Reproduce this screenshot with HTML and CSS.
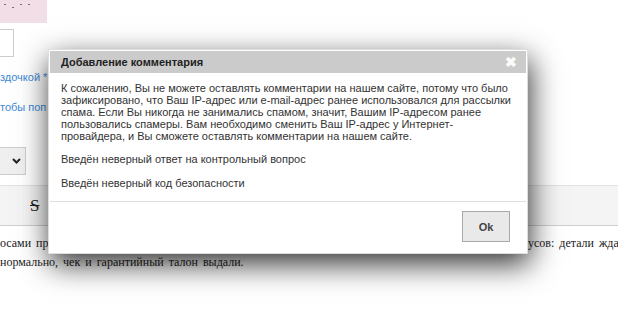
FILE: index.html
```html
<!DOCTYPE html>
<html lang="ru">
<head>
    <meta charset="UTF-8">
    <title>Добавление комментария</title>
    <link rel="stylesheet" href="styles.css">
</head>
<body>
    <div class="page">
        <div class="captcha"><span class="dot"></span><span class="dot"></span><span class="dot"></span><span class="dot"></span></div>
        <div class="field"></div>
        <div class="hint">здочкой *</div>
        <div class="hint hint-second">тобы поп</div>
        <div class="select">
            <svg width="9" height="6" viewBox="0 0 9 6"><polyline points="1,1 4.5,4.5 8,1" fill="none" stroke="#222" stroke-width="2"/></svg>
        </div>
        <div class="toolbar">
            <span class="strike">S</span>
        </div>
        <div class="review">
            <div class="review-line">
                <span class="review-left">осами при оформлении заказа помогли, менеджер подробно рассказал о смене статусов:</span>
                <span>усов: детали ждать не пришлось</span>
            </div>
            <div class="review-line">нормально, чек и гарантийный талон выдали.</div>
        </div>
    </div>

    <!-- Comment dialog -->
    <div class="dialog">
        <div class="dialog-title">
            <span>Добавление комментария</span>
            <span class="dialog-close">✖</span>
        </div>
        <div class="dialog-body">
            <p>К сожалению, Вы не можете оставлять комментарии на нашем сайте, потому что было зафиксировано, что Ваш IP-адрес или e-mail-адрес ранее использовался для рассылки спама. Если Вы никогда не занимались спамом, значит, Вашим IP-адресом ранее пользовались спамеры. Вам необходимо сменить Ваш IP-адрес у Интернет-провайдера, и Вы сможете оставлять комментарии на нашем сайте.</p>
            <p>Введён неверный ответ на контрольный вопрос</p>
            <p>Введён неверный код безопасности</p>
        </div>
        <div class="dialog-buttons">
            <button class="btn-ok">Ok</button>
        </div>
    </div>
</body>
</html>
```

FILE: styles.css
```css
* {
    margin: 0;
    padding: 0;
    box-sizing: border-box;
}

body {
    width: 618px;
    height: 323px;
    overflow: hidden;
    background: #fff;
    font-family: 'Liberation Sans', Arial, sans-serif;
}

.page {
    width: 618px;
    overflow: hidden;
}

.captcha {
    width: 47px;
    height: 23px;
    background: #f1dee6;
    padding: 4px 0 0 4px;
    display: flex;
    gap: 6px;
    align-items: flex-start;
}

.dot {
    width: 2px;
    height: 1px;
    background: #7a6a76;
}

.dot:nth-child(2) {
    margin-top: 3px;
}

.field {
    margin-top: 6px;
    width: 14px;
    height: 28px;
    border: 1px solid #ccc;
    border-left: none;
    background: #fff;
}

.hint {
    margin-top: 14px;
    font-size: 11px;
    line-height: 13px;
    color: #3d8ad6;
}

.hint-second {
    margin-top: 17px;
}

.select {
    margin-top: 33px;
    width: 26px;
    height: 28px;
    background: #efefef;
    border: 1px solid #ccc;
    border-left: none;
    display: flex;
    align-items: center;
    justify-content: flex-end;
    padding-right: 4px;
}

.toolbar {
    margin-top: 10px;
    height: 41px;
    background: #f4f4f4;
    border-top: 1px solid #e2e2e2;
    border-bottom: 1px solid #cfcfcf;
    padding: 10px 0 0 30px;
}

.strike {
    font-family: 'Liberation Serif', serif;
    font-size: 17px;
    text-decoration: line-through;
    color: #222;
}

.review {
    padding-top: 8px;
    font-family: 'Liberation Serif', serif;
    font-size: 12px;
    line-height: 19px;
    color: #222;
    word-spacing: 2px;
    white-space: nowrap;
    overflow: hidden;
}

.review-line {
    display: flex;
}

.review-left {
    flex-shrink: 0;
    width: 528px;
    overflow: hidden;
}

.dialog {
    position: absolute;
    left: 48px;
    top: 49px;
    width: 480px;
    height: 205px;
    background: #fff;
    border: 1px solid #ddd;
    padding: 1px;
    box-shadow: 2px 10px 28px rgba(0, 0, 0, 0.8);
    font-size: 11px;
    color: #333;
}

.dialog-title {
    height: 22px;
    background: #cbcbcb;
    padding: 0 9px 0 11px;
    display: flex;
    align-items: center;
    justify-content: space-between;
    font-weight: bold;
    color: #222;
}

.dialog-close {
    color: #fbfbfb;
    font-size: 14px;
}

.dialog-body {
    padding: 9px 10px 0 11px;
    line-height: 12px;
    height: 129px;
    border-bottom: 1px solid #ddd;
}

.dialog-body p {
    margin-bottom: 12px;
}

.dialog-body p:first-child {
    margin-bottom: 11px;
}

.dialog-buttons {
    display: flex;
    justify-content: flex-end;
    padding: 9px 16px 0 0;
}

.btn-ok {
    width: 48px;
    height: 31px;
    background: #e9e9e9;
    border: 1px solid #a9a9a9;
    font-family: 'Liberation Sans', Arial, sans-serif;
    font-size: 11px;
    font-weight: bold;
    color: #444;
}
```
